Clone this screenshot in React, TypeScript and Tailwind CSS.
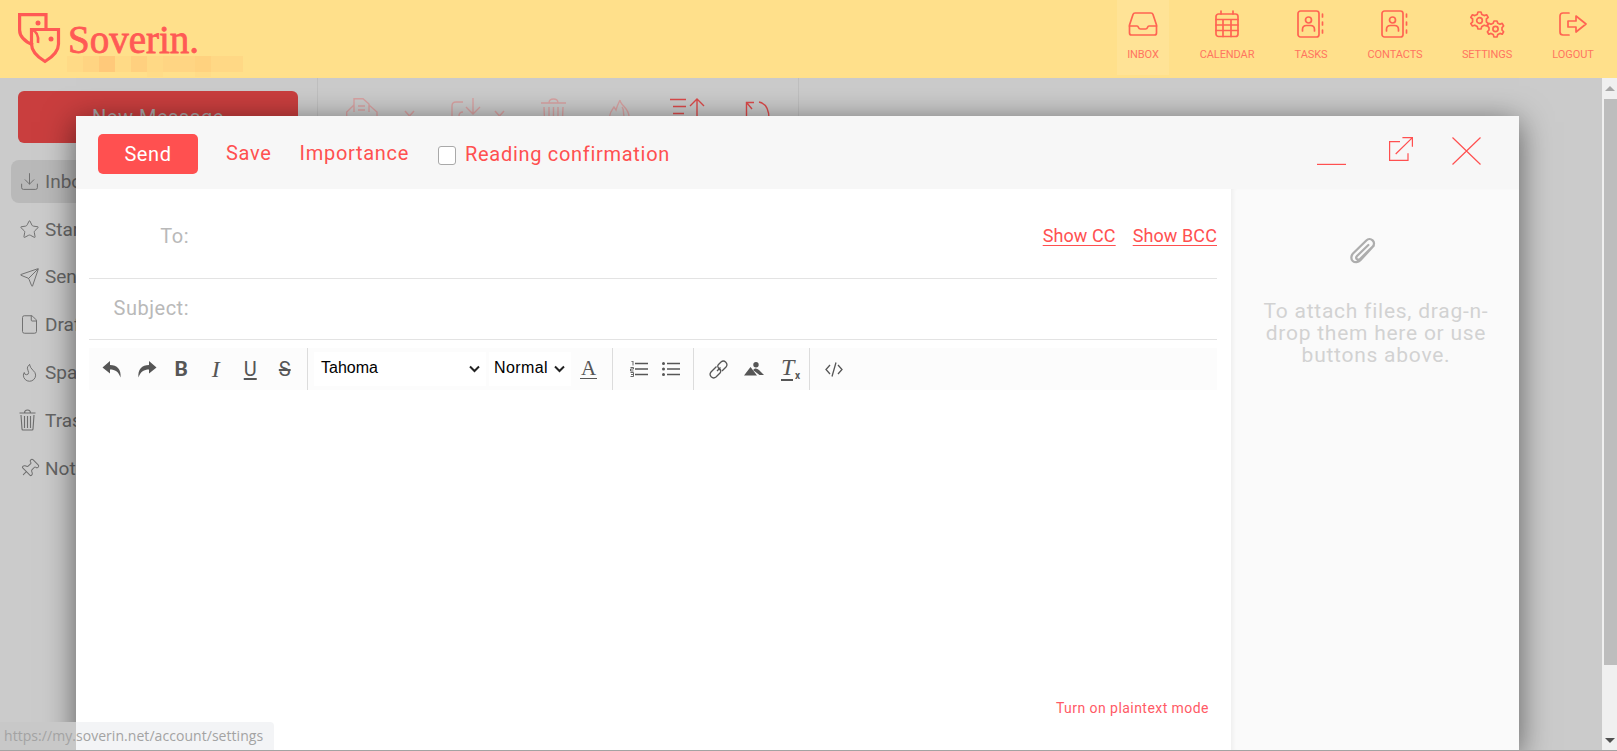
import React from "react";
import { Download, Star, Send, File, Flame, Pin } from "lucide-react";

const NAVC = "#ff6452";

function Logo() {
  return (
    <svg width="44" height="52" viewBox="0 0 44 52" fill="none" stroke="#ff5a55" strokeWidth="3.2" className="shrink-0">
      <path d="M28 15 V1.6 H1.6 V17 C1.6 24 8 29 15 32" />
      <path d="M13.5 16.5 H40.5 V31 C40.5 40 32 45.5 27 48.5 C22 45.5 13.5 40 13.5 31 Z" />
      <path d="M13.5 16.5 C18 18 21 22 20 30" strokeWidth="2.6" />
      <circle cx="20" cy="10" r="2.5" fill="#ff5a55" stroke="none" />
      <circle cx="33" cy="26" r="2.5" fill="#ff5a55" stroke="none" />
    </svg>
  );
}

function Mosaic() {
  const blocks = [
    ["w-[16px]", "bg-[#ffda86]"],
    ["w-[16px]", "bg-[#ffd482]"],
    ["w-[16px]", "bg-[#ffc97a]"],
    ["w-[16px]", "bg-[#ffda86]"],
    ["w-[16px]", "bg-[#ffd07f]"],
    ["w-[16px]", "bg-[#ffd985]"],
    ["w-[32px]", "bg-[#ffd583]"],
    ["w-[16px]", "bg-[#ffd27f]"],
    ["w-[32px]", "bg-[#ffd885]"],
  ];
  return (
    <div className="flex flex-col">
      <div className="flex h-[16px]">
        {blocks.map(([w, c], i) => (
          <div key={i} className={`${w} ${c} h-full`} />
        ))}
      </div>
      <div className="flex h-[5px]">
        <div className="w-[80px]" />
        <div className="w-[16px] bg-[#ffdc88]" />
        <div className="w-[32px]" />
        <div className="w-[16px] bg-[#ffdc88]" />
      </div>
    </div>
  );
}

const navSvg = { fill: "none", stroke: NAVC, strokeWidth: 1.7, strokeLinecap: "round" as const, strokeLinejoin: "round" as const };

function NavIcon({ name }: { name: string }) {
  if (name === "inbox")
    return (
      <svg width="30" height="28" viewBox="0 0 30 28" {...navSvg}>
        <path d="M7 3 H23 Q24.5 3 25 4.5 L28.5 15 V23 Q28.5 25 26.5 25 H3.5 Q1.5 25 1.5 23 V15 L5 4.5 Q5.5 3 7 3 Z" />
        <path d="M1.5 16 H9 Q10 16 10.5 17.5 Q11 19 12.5 19 H17.5 Q19 19 19.5 17.5 Q20 16 21 16 H28.5" />
      </svg>
    );
  if (name === "calendar")
    return (
      <svg width="26" height="28" viewBox="0 0 26 28" {...navSvg}>
        <rect x="2" y="4" width="22" height="22.5" rx="2.5" />
        <path d="M7 1 V4 M19 1 V4 M2 9.5 H24 M2 15 H24 M2 20.5 H24 M9 9.5 V26.5 M17 9.5 V26.5" />
      </svg>
    );
  if (name === "book")
    return (
      <svg width="28" height="28" viewBox="0 0 28 28" {...navSvg}>
        <rect x="1" y="1" width="21" height="26" rx="2.5" />
        <circle cx="11.5" cy="10" r="3" />
        <path d="M5.5 21 V19.5 Q5.5 15.5 9.5 15.5 H13.5 Q17.5 15.5 17.5 19.5 V21" />
        <path d="M25.5 4 V7 M25.5 12 V15 M25.5 20 V23" />
      </svg>
    );
  if (name === "settings")
    return (
      <svg width="36" height="28" viewBox="0 0 36 28" {...navSvg}>
        <path d="M9 2 L12 2 L12.8 4.4 L15.2 5.6 L17.6 4.8 L19.2 7.4 L17.4 9 L17.4 11.8 L19.2 13.6 L17.6 16 L15.2 15.2 L12.8 16.4 L12 19 L9 19 L8.2 16.4 L5.8 15.2 L3.4 16 L1.8 13.6 L3.6 11.8 L3.6 9 L1.8 7.4 L3.4 4.8 L5.8 5.6 L8.2 4.4 Z" />
        <circle cx="10.5" cy="10.5" r="2.8" />
        <path d="M25 11 L28 11 L28.8 13.2 L31 14.2 L33.2 13.4 L34.6 16 L33 17.6 L33 20 L34.6 21.8 L33.2 24.2 L31 23.4 L28.8 24.6 L28 27 L25 27 L24.2 24.6 L22 23.4 L19.8 24.2 L18.4 21.8 L20 20 L20 17.6 L18.4 16 L19.8 13.4 L22 14.2 L24.2 13.2 Z" />
        <circle cx="26.5" cy="19" r="2.6" />
      </svg>
    );
  return (
    <svg width="30" height="28" viewBox="0 0 30 28" {...navSvg}>
      <path d="M11 3 H5 Q2 3 2 6 V22 Q2 25 5 25 H11" />
      <path d="M10 11 H18 V6 L28 14 L18 22 V17 H10 Z" />
    </svg>
  );
}

function NavItem({ icon, label, w, active }: { icon: string; label: string; w: string; active?: boolean }) {
  return (
    <div className={`${w} h-[75px] flex flex-col items-center ${active ? "bg-[#ffe396]" : ""}`}>
      <div className="h-[28px] mt-[10px] flex items-center justify-center">
        <NavIcon name={icon} />
      </div>
      <div className="mt-[9px] text-[11px] leading-[16px] tracking-[-0.1px] text-[#ff7560] whitespace-nowrap">{label}</div>
    </div>
  );
}

function SideItem({ label, active, children }: { label: string; active?: boolean; children: React.ReactNode }) {
  return (
    <div className={`h-[43px] flex items-center pl-[8px] rounded-lg ${active ? "bg-[#b9b9b9]" : ""}`}>
      <div className="w-[26px] flex justify-start text-[#6e6e6e]">{children}</div>
      <span className="text-[19px] mt-[1px] text-[#666666]">{label}</span>
    </div>
  );
}

function Chevron({ color }: { color: string }) {
  return (
    <svg width="11" height="7" viewBox="0 0 11 7" fill="none" stroke={color} strokeWidth="1.5">
      <path d="M1 1 L5.5 6 L10 1" />
    </svg>
  );
}

function BackToolbar() {
  const pale = { fill: "none", stroke: "#d9a3a3", strokeWidth: 1.4 };
  const strong = { fill: "none", stroke: "#dc4a4a", strokeWidth: 1.4 };
  return (
    <div className="w-[481px] shrink-0 border-r border-r-[#bfbfbf] h-full flex items-start pt-[20px] pl-[28px]">
      <svg width="32" height="34" viewBox="0 0 32 34" {...pale} className="shrink-0">
        <path d="M8 14 V0.7 H17 L23 6 V14 M12 8 H19 M12 12 H19 M8 7 L0.7 14 V34 M23 7 L31 14 V34" />
      </svg>
      <div className="ml-[26px] mt-[12px]"><Chevron color="#d9a3a3" /></div>
      <svg width="30" height="34" viewBox="0 0 30 34" {...pale} className="ml-[36px] shrink-0">
        <path d="M12 4 H5 Q1 4 1 8 V26 M12 14 Q8 14 8 18 V26 M22 0 V15 M15 9 L22 16 L29 9" />
      </svg>
      <div className="ml-[13px] mt-[12px]"><Chevron color="#d9a3a3" /></div>
      <svg width="25" height="34" viewBox="0 0 25 34" {...pale} className="ml-[36px] shrink-0">
        <path d="M0 5 H25 M8 5 Q8 1 12.5 1 Q17 1 17 5 M3 9 L4 34 M22 9 L21 34 M8 9 V34 M12.5 9 V34 M17 9 V34" />
      </svg>
      <svg width="22" height="34" viewBox="0 0 22 34" {...pale} className="ml-[43px] shrink-0">
        <path d="M11 2 C11 7 19 9 20 18 M11 2 C9 6 8 8 7 12 L5 9 C3 12 1 14 0.7 18 M13 9 C15 11 14 14 15 18" />
      </svg>
      <svg width="37" height="34" viewBox="0 0 37 34" {...strong} className="ml-[39px] shrink-0">
        <path d="M0 1.5 H16 M3 8.5 H16 M3 15.5 H14 M27 34 V1 M20 8 L27 1 L34 8" />
      </svg>
      <svg width="25" height="34" viewBox="0 0 25 34" {...strong} className="ml-[38px] mt-[3px] shrink-0">
        <path d="M1.5 20 V1.5 H9 M1.5 1.5 L7 8 M14 1 Q24 3 24 18" />
      </svg>
    </div>
  );
}

function Scrollbar() {
  return (
    <div className="w-[15px] shrink-0 h-full border-l border-l-[#efefef] bg-[#f0f0f0] flex flex-col items-center relative">
      <div className="h-[21px] w-full bg-[#f0f0f0] flex items-center justify-center">
        <div className="w-0 h-0 border-l-[5px] border-r-[5px] border-b-[5px] border-l-transparent border-r-transparent border-b-[#a8a8a8]" />
      </div>
      <div className="h-[566px] w-[14px] ml-[1px] bg-[#bdbdbd]" />
      <div className="mt-auto h-[21px] w-full flex items-center justify-center">
        <div className="w-0 h-0 border-l-[5px] border-r-[5px] border-t-[5px] border-l-transparent border-r-transparent border-t-[#505050]" />
      </div>
    </div>
  );
}

const tb = { fill: "#565656" };
const tbs = { fill: "none", stroke: "#565656", strokeWidth: 1.3 };

function TBtn({ children, w = "w-[34.5px]" }: { children: React.ReactNode; w?: string }) {
  return <div className={`${w} h-full flex items-center justify-center shrink-0`}>{children}</div>;
}

function Sep() {
  return <div className="w-px h-full bg-[#dcdcdc] shrink-0" />;
}

function EditorToolbar() {
  return (
    <div className="mt-[8px] h-[42px] bg-[#fcfcfc] flex items-center text-[#565656]">
      <div className="pl-[6px] pr-[5px] h-full flex shrink-0">
        <TBtn>
          <svg width="20" height="18" viewBox="0 0 20 18" {...tb}>
            <path d="M8 1 L0.5 7.5 L8 13.5 V9.5 C13 9.5 16.5 11.5 18.5 17.5 C19.5 9.5 15 5 8 5 Z" />
          </svg>
        </TBtn>
        <TBtn>
          <svg width="20" height="18" viewBox="0 0 20 18" {...tb} className="-scale-x-100">
            <path d="M8 1 L0.5 7.5 L8 13.5 V9.5 C13 9.5 16.5 11.5 18.5 17.5 C19.5 9.5 15 5 8 5 Z" />
          </svg>
        </TBtn>
        <TBtn><span className="font-['Roboto',sans-serif] font-bold text-[21px] leading-none">B</span></TBtn>
        <TBtn><span className="font-['Liberation_Serif',serif] italic text-[24px] leading-none">I</span></TBtn>
        <TBtn><span className="font-['Roboto',sans-serif] text-[20px] leading-none underline underline-offset-2">U</span></TBtn>
        <TBtn><span className="font-['Roboto',sans-serif] text-[20px] leading-none line-through">S</span></TBtn>
      </div>
      <Sep />
      <div className="h-full w-[304px] flex items-center shrink-0 font-['Liberation_Sans',sans-serif] text-black text-[16px]">
        <div className="ml-[6px] w-[172px] h-[34px] bg-white flex items-center pl-[7px] pr-[6px] pb-[3px]">
          <span className="flex-1">Tahoma</span>
          <svg width="11" height="8" viewBox="0 0 11 8" fill="none" stroke="#222" strokeWidth="2" className="mt-[3px]"><path d="M1 1.5 L5.5 6 L10 1.5" /></svg>
        </div>
        <div className="ml-[3px] w-[82px] h-[34px] bg-white flex items-center pl-[5px] tracking-[0.4px] pb-[3px]">
          <span className="flex-1">Normal</span>
          <svg width="11" height="8" viewBox="0 0 11 8" fill="none" stroke="#222" strokeWidth="2" className="mr-[6px] mt-[3px]"><path d="M1 1.5 L5.5 6 L10 1.5" /></svg>
        </div>
        <div className="ml-[9px] flex flex-col items-center text-[#565656] font-['Liberation_Serif',serif]">
          <span className="text-[21px] leading-[18px]">A</span>
          <div className="w-[17px] h-[1.5px] bg-[#565656] mt-[1px]" />
        </div>
      </div>
      <Sep />
      <div className="h-full w-[80px] flex shrink-0 pl-[1px]">
        <TBtn w="w-[44px]">
          <svg width="18" height="16" viewBox="0 0 18 16" fill="none" className="ml-[5px]">
            <path d="M5 2.5 H18 M5 8 H18 M5 13.5 H18" stroke="#565656" strokeWidth="1.4" />
            <path d="M1.5 0.5 L3 0 V4.5 M0.5 6.5 H3.5 V8 H0.5 V10 H3.5 M0.5 11.5 H3.5 V15.5 H0.5 M1 13.5 H3.5" stroke="#565656" strokeWidth="0.9" />
          </svg>
        </TBtn>
        <TBtn w="w-[24px]">
          <svg width="18" height="16" viewBox="0 0 18 16" fill="none" stroke="#565656" strokeWidth="1.4" className="ml-[2px]">
            <path d="M5 2.5 H18 M5 8 H18 M5 13.5 H18" />
            <circle cx="1.5" cy="2.5" r="1.5" fill="#565656" stroke="none" />
            <circle cx="1.5" cy="8" r="1.5" fill="#565656" stroke="none" />
            <circle cx="1.5" cy="13.5" r="1.5" fill="#565656" stroke="none" />
          </svg>
        </TBtn>
      </div>
      <Sep />
      <div className="h-full w-[115px] flex items-center shrink-0 pl-[15px]">
        <svg width="19" height="19" viewBox="0 0 19 19" {...tbs}>
          <path d="M8 11 L11.5 7.5 M7.5 6.5 L2 12 Q0 14.5 2.2 16.8 Q4.5 19 7 17 L11 13 Q12.5 11 11 9.3" />
          <path d="M11 10 L9.5 8 Q8 6 9.5 4.5 L12 2 Q14.5 0 16.8 2.2 Q19 4.5 17 7 L13 11" />
        </svg>
        <svg width="20" height="14" viewBox="0 0 20 14" {...tb} className="ml-[16px]">
          <circle cx="12" cy="2.7" r="2.7" />
          <path d="M0 13.5 L6.5 5 L13 13.5 Z M9 8 L11 6.5 Q13 6 15 8 L20 13 L15.5 13 Z" />
        </svg>
        <div className="ml-[17px] relative w-[16px] h-[24px] text-[#565656]">
          <span className="font-['Liberation_Serif',serif] italic text-[24px] leading-[21px] block">T</span>
          <div className="w-[12px] h-[1.5px] bg-[#565656] mt-[1px]" />
          <span className="absolute -right-[3px] bottom-[0px] font-['Roboto',sans-serif] font-bold text-[10px] leading-none">x</span>
        </div>
      </div>
      <Sep />
      <div className="pl-[15px] flex items-center">
        <svg width="18" height="15" viewBox="0 0 18 15" {...tbs}>
          <path d="M5 3 L1 7.5 L5 12 M13 3 L17 7.5 L13 12 M11 0.5 L7 14.5" />
        </svg>
      </div>
    </div>
  );
}

function Modal() {
  const red = "#ff5050";
  return (
    <div className="absolute left-[76px] top-[116px] w-[1443px] h-[635px] bg-white shadow-[0_6px_30px_rgba(0,0,0,0.55)] flex flex-col">
      <div className="h-[73px] shrink-0 bg-[#f7f7f7] flex items-start pt-[18px] pl-[22px] pr-[38px] text-[20px] tracking-[0.7px] text-[#ff5050]">
        <div className="w-[100px] h-[40px] rounded-[5px] bg-[#ff5050] text-white text-[20px] tracking-[0.6px] flex items-center justify-center">Send</div>
        <span className="ml-[28px] mt-[6px] leading-[26px]">Save</span>
        <span className="ml-[28px] mt-[6px] leading-[26px]">Importance</span>
        <div className="ml-[29px] mt-[12px] w-[18px] h-[19px] bg-white border border-[#a9a9a9] rounded-[3px]" />
        <span className="ml-[9px] mt-[7px] leading-[26px]">Reading confirmation</span>
        <div className="ml-auto mt-[3px] flex items-start">
          <svg width="29" height="28" viewBox="0 0 29 28" fill="none" stroke={red}><path d="M0 27.5 H29" strokeWidth="1.4" /></svg>
          <svg width="24" height="24" viewBox="0 0 24 24" fill="none" stroke={red} strokeWidth="1.2" className="ml-[43px]">
            <path d="M11 4.7 H0.6 V23.4 H19 V16.3 M13.4 0.6 H23.4 V9.7 M23.4 0.6 L6.7 17" />
          </svg>
          <svg width="29" height="28" viewBox="0 0 29 28" fill="none" stroke={red} strokeWidth="1.2" className="ml-[39px]">
            <path d="M0.5 0.5 L28.5 27.5 M28.5 0.5 L0.5 27.5" />
          </svg>
        </div>
      </div>
      <div className="flex-1 flex min-h-0">
        <div className="flex-1 flex flex-col pl-[13px] pr-[14px]">
          <div className="h-[90px] shrink-0 border-b border-b-[#e3e3e3] flex items-center text-[20px] tracking-[0.5px]">
            <span className="w-[100px] text-right text-[#b9b9b9] mt-[5px]">To:</span>
            <div className="ml-auto flex gap-[17px] text-[18px] tracking-[0.1px] text-[#ff5050] underline underline-offset-[3px] mt-[3px]">
              <span>Show CC</span>
              <span>Show BCC</span>
            </div>
          </div>
          <div className="h-[61px] shrink-0 border-b border-b-[#e3e3e3] flex items-center text-[20px] tracking-[0.5px]">
            <span className="w-[100px] text-right text-[#b9b9b9] mb-[2px]">Subject:</span>
          </div>
          <EditorToolbar />
          <div className="mt-auto mb-[33px] pr-[8px] text-right text-[14px] leading-[20px] tracking-[0.45px] text-[#ff5a66]">Turn on plaintext mode</div>
        </div>
        <div className="w-[288px] shrink-0 bg-[#fafafa] shadow-[inset_4px_0_4px_-2px_rgba(0,0,0,0.05)] flex flex-col items-center pl-[5px] pr-[3px]">
          <svg width="32" height="32" viewBox="0 0 24 24" fill="none" stroke="#adadad" strokeWidth="1.7" strokeLinecap="round" className="mt-[48px] mr-[26px]">
            <path d="M20 6.5 L10 17.5 C8.5 19.2 5.8 19.4 4.3 18 C2.8 16.6 3 14 4.5 12.4 L14.5 2.6 C15.8 1.3 17.8 1.2 19.2 2.5 C20.6 3.9 20.6 5.8 19.3 7.1 L9.8 16.5 C9.1 17.2 8 17.2 7.4 16.6 C6.8 16 6.8 15 7.5 14.2 L16 6" />
          </svg>
          <div className="mt-[31px] text-center text-[21px] leading-[22px] tracking-[0.75px] text-[#d2d2d2]">
            To attach files, drag-n-
            <br />
            drop them here or use
            <br />
            buttons above.
          </div>
        </div>
      </div>
    </div>
  );
}

export default function App() {
  return (
    <div className="relative w-[1617px] h-[751px] overflow-hidden bg-[#cbcbcb] font-['Roboto',sans-serif]">
      <header className="h-[78px] bg-[#ffe08b] flex items-start">
        <div className="pl-[18px] pt-[13px] flex items-start shrink-0">
          <Logo />
          <div className="flex flex-col ml-[6px]">
            <span className="font-['Liberation_Serif',serif] text-[39px] leading-[38px] mt-[8px] text-[#ff5a55] [-webkit-text-stroke:0.8px_#ff5a55]">Soverin.</span>
            <div className="mt-[-3px] ml-[-1px]"><Mosaic /></div>
          </div>
        </div>
        <nav className="ml-auto mr-[8px] flex">
          <NavItem icon="inbox" label="INBOX" w="w-[52px]" active />
          <div className="w-[16px]" />
          <NavItem icon="calendar" label="CALENDAR" w="w-[84px]" />
          <NavItem icon="book" label="TASKS" w="w-[84px]" />
          <NavItem icon="book" label="CONTACTS" w="w-[84px]" />
          <NavItem icon="settings" label="SETTINGS" w="w-[100px]" />
          <NavItem icon="logout" label="LOGOUT" w="w-[72px]" />
        </nav>
      </header>
      <div className="h-[673px] flex">
        <aside className="w-[318px] shrink-0 h-full border-r border-r-[#bfbfbf] pl-[11px] pr-[19px]">
          <div className="mt-[13px] ml-[7px] h-[52px] rounded-[6px] bg-[#c93e3e] flex items-start justify-center pt-[11px] text-[20px] tracking-[0.5px] text-[#a9a9a9]">New Message</div>
          <div className="mt-[17px] flex flex-col gap-[4.8px]">
            <SideItem label="Inbox" active><Download size={21} strokeWidth={1.1} /></SideItem>
            <SideItem label="Starred"><Star size={21} strokeWidth={1.1} /></SideItem>
            <SideItem label="Sent"><Send size={21} strokeWidth={1.1} /></SideItem>
            <SideItem label="Drafts"><File size={21} strokeWidth={1.1} /></SideItem>
            <SideItem label="Spam"><Flame size={21} strokeWidth={1.1} /></SideItem>
            <SideItem label="Trash">
              <svg width="17" height="22" viewBox="0 0 17 22" fill="none" stroke="#6e6e6e" strokeWidth="1.1">
                <path d="M0.5 4 H16.5 M5.5 4 Q5.5 1 8.5 1 Q11.5 1 11.5 4 M2 6 L3 20 Q3 21 4 21 H13 Q14 21 14 20 L15 6 M5.5 7 V19 M8.5 7 V19 M11.5 7 V19" />
              </svg>
            </SideItem>
            <SideItem label="Notes"><Pin size={21} strokeWidth={1.1} className="rotate-45" /></SideItem>
          </div>
        </aside>
        <BackToolbar />
        <div className="flex-1" />
        <Scrollbar />
      </div>
      <Modal />
      <div className="absolute left-0 bottom-[1px] w-[274px] h-[28px] rounded-tr-[4px] bg-[linear-gradient(to_right,#c8c8c8_76px,#f3f4f6_76px)] pl-[4px] font-['Open_Sans',sans-serif] text-[14px] leading-[28px] tracking-[0.05px] text-[#a3a3a3] whitespace-nowrap">https://my.soverin.net/account/settings</div>
      <div className="absolute left-0 right-0 bottom-0 h-px bg-[#a3a3a3]" />
    </div>
  );
}
